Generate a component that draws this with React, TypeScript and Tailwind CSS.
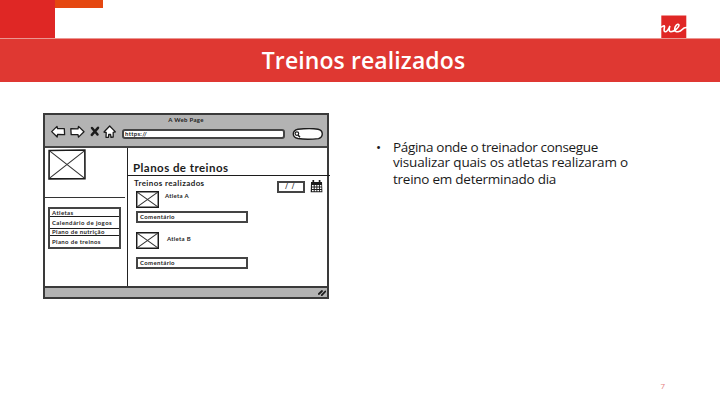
import React from "react";

const ink = "#1c1c1c";

function Placeholder({ className }: { className: string }) {
  return (
    <svg className={className} viewBox="0 0 40 30" preserveAspectRatio="none" fill="none" stroke={ink}>
      <path d="M1.2 1.4 38.8 1 38.9 28.8 1.1 28.9Z" fill="#fff" strokeWidth="1.6" vectorEffect="non-scaling-stroke" />
      <path d="M2 2 38 28M38 2 2 28" stroke="#333" strokeWidth="1.1" vectorEffect="non-scaling-stroke" />
    </svg>
  );
}

function Logo() {
  return (
    <svg className="h-[24px] w-[27px]" viewBox="0 0 27 24" fill="none">
      <path d="M1.3 .5H26.3V24H1.3Z" fill="#e02725" />
      <path
        d="M0 12.6C2 12.3 3 10.8 4 10.8 5.6 10.8 2.6 16.5 5.2 16.7 7.8 16.8 9.4 12 9.9 10.9 9.1 13.5 8.6 16.7 10.9 16.7 13.9 16.7 19.8 12 18.9 9.8 17.8 7.7 14.3 11.5 14.8 14.6 15.3 18.3 20.5 16.5 22.2 14.5 23.3 13.2 24.2 12.4 26.5 12.5"
        stroke="#fff"
        strokeWidth="1.6"
        strokeLinecap="round"
      />
    </svg>
  );
}

function BrowserBar() {
  return (
    <div className="flex h-[33px] shrink-0 flex-col border-b-2 border-[#444] bg-[#b3b3b3]">
      <div className="h-[9px] text-center text-[6px] leading-[9px] font-bold tracking-[0.3px]">A Web Page</div>
      <div className="mt-[1px] flex h-[14px] items-center pl-[6px]">
        <svg className="h-[14px] w-[66px] shrink-0" viewBox="0 0 66 14" fill="#fff" stroke={ink} strokeWidth="1.3" strokeLinejoin="round">
          <path d="M.7 6.6 6 1.4 6.5 3.7 13.3 3.6 13.6 9.6 6.5 9.5 6.2 12Z" />
          <path d="M33 6.8 27.5 1.4 27 3.8 19.8 3.6 20.2 9.6 27 9.6 27.5 12.1Z" />
          <path d="M41 3 46.5 9.5M47 2.8 40.8 9.8" strokeWidth="2.5" strokeLinecap="round" />
          <path d="M58.7 1 53 7 55.2 7.5 55 12.3 57.5 12.3 57.7 9.5 59.6 9.5 60 12.3 62.2 12 62.2 7.4 64.4 6.9Z" />
        </svg>
        <div className="mt-[3px] ml-[5px] h-[10px] w-[163px] shrink-0 rounded-[3px] border-2 border-[#444] bg-white pl-[1px] text-[6px] leading-[6px] font-bold tracking-[0.3px]">
          https://
        </div>
        <svg className="mt-[3px] ml-[7px] h-[12px] w-[32px] shrink-0" viewBox="0 0 32 12" fill="#fff" stroke={ink} strokeWidth="1.4">
          <path d="M6 1.3C13 .4 22 .5 26 1.3 31.6 2.5 31.6 9 26.5 10.6 20 11.3 11 11.3 6 10.5-.3 9-.3 2.8 6 1.3Z" />
          <circle cx="4.9" cy="5.6" r="1.8" strokeWidth="1.2" />
          <path d="M6 7 8 9.3" />
        </svg>
      </div>
    </div>
  );
}

function Sidebar() {
  return (
    <div className="flex w-[82px] shrink-0 flex-col">
      <Placeholder className="mt-[1px] ml-[3px] h-[31px] w-[38px] shrink-0" />
      <div className="mt-[17px] h-px w-[80px] shrink-0 bg-[#333]" />
      <div className="mt-[9px] ml-[3px] flex h-[42px] w-[73px] shrink-0 flex-col border-2 border-[#444] text-[6px] font-bold whitespace-nowrap">
        <div className="h-[8px] border-b border-[#1c1c1c] pl-[2px] leading-[8px] tracking-[0.4px]">Atletas</div>
        <div className="h-[12px] border-b border-[#1c1c1c] pl-[2px] leading-[12px] tracking-[0.4px]">Calendário de jogos</div>
        <div className="h-[7px] border-b border-[#1c1c1c] pl-[2px] leading-[6px] tracking-[0.35px]">Plano de nutrição</div>
        <div className="h-[11px] pl-[2px] leading-[11px] tracking-[0.35px]">Plano de treinos</div>
      </div>
    </div>
  );
}

function Comment() {
  return (
    <div className="ml-[8px] h-[12px] w-[112px] shrink-0 border-2 border-[#444] pl-[2px] text-[6px] leading-[8px] font-bold tracking-[0.35px]">
      Comentário
    </div>
  );
}

function Calendar() {
  return (
    <svg className="h-[13px] w-[13px] shrink-0" viewBox="0 0 13 13">
      <path d="M1 2H12L12.4 12.3H.7Z" fill={ink} />
      <path d="M3.3 0V3M9.6 0V3" stroke={ink} strokeWidth="1.7" />
      <path d="M2 5h1.7v1.5H2zM4.7 5h1.7v1.5H4.7zM7.3 5H9v1.5H7.3zM9.9 5h1.5v1.5H9.9zM2 7.5h1.7V9H2zM4.7 7.5h1.7V9H4.7zM7.3 7.5H9V9H7.3zM9.9 7.5h1.5V9H9.9zM2 10h1.7v1.3H2zM4.7 10h1.7v1.3H4.7zM7.3 10H9v1.3H7.3zM9.9 10h1.5v1.3H9.9z" fill="#fff" />
    </svg>
  );
}

function Content() {
  return (
    <div className="flex w-[202px] shrink-0 flex-col border-l border-[#222]">
      <div className="h-[28px] w-[202px] shrink-0 border-b border-[#1c1c1c] pt-[13px] pl-[5px] text-[11.5px] leading-[14px] font-bold tracking-[0.45px] whitespace-nowrap">
        Planos de treinos
      </div>
      <div className="flex h-[15px] shrink-0">
        <div className="mt-[2px] ml-[6px] w-[143px] shrink-0 text-[8px] leading-[11px] font-bold tracking-[0.4px] whitespace-nowrap">Treinos realizados</div>
        <div className="mt-[5px] h-[12px] w-[28px] shrink-0 border-2 border-[#444] pl-[6px] text-[6.5px] leading-[8px] font-bold tracking-[1px]">/ /</div>
        <div className="mt-[4px] ml-[5px]"><Calendar /></div>
      </div>
      <div className="ml-[8px] flex h-[20px] shrink-0">
        <Placeholder className="h-[17px] w-[23px]" />
        <span className="ml-[6px] text-[6px] leading-[10px] font-bold tracking-[0.3px]">Atleta A</span>
      </div>
      <Comment />
      <div className="mt-[9px] ml-[8px] flex h-[25px] shrink-0">
        <Placeholder className="h-[17px] w-[23px]" />
        <span className="ml-[8px] text-[6px] leading-[14px] font-bold tracking-[0.3px]">Atleta B</span>
      </div>
      <Comment />
    </div>
  );
}

function Wireframe() {
  return (
    <div className="flex h-[186px] w-[286px] shrink-0 flex-col border-2 border-[#3a3a3a] bg-white font-['Lato',sans-serif] text-[#1c1c1c]">
      <BrowserBar />
      <div className="flex h-[138px] shrink-0">
        <Sidebar />
        <Content />
      </div>
      <div className="flex flex-1 justify-end border-t-2 border-[#3a3a3a] bg-[#b3b3b3] pt-[2px] pr-[1px]">
        <svg className="h-[6px] w-[8px]" viewBox="0 0 8 6" stroke={ink} strokeWidth="1.8" strokeLinecap="round">
          <path d="M.8 4 4 1M3.8 5.2 7.3 1.5" />
        </svg>
      </div>
    </div>
  );
}

export default function App() {
  return (
    <div className="flex h-[405px] w-[720px] flex-col overflow-hidden bg-white font-['Open_Sans',sans-serif]">
      <header className="flex h-[38px] shrink-0">
        <div className="h-[38px] w-[55px] bg-[#df2725]" />
        <div className="h-[8px] w-[48px] bg-[#e54710]" />
        <div className="mt-[15px] ml-[557px]"><Logo /></div>
      </header>
      <div className="flex h-[44px] shrink-0 justify-center border-t border-[#eb9692] bg-[#df3832] pl-[7px]">
        <h1 className="text-[23px] leading-[43px] font-semibold tracking-[0.1px] whitespace-nowrap text-white">Treinos realizados</h1>
      </div>
      <main className="flex h-[298px] shrink-0 pt-[31px] pl-[43px]">
        <Wireframe />
        <div className="mt-[26px] ml-[47px] flex text-[13.5px] text-[#1a1a1a]">
          <span className="w-[17px] leading-[16px]">•</span>
          <p className="whitespace-nowrap">
            <span className="block h-[15px] leading-[16px] tracking-[-0.33px]">Página onde o treinador consegue</span>
            <span className="block h-[17px] leading-[16px] tracking-[-0.16px]">visualizar quais os atletas realizaram o</span>
            <span className="block h-[16px] leading-[16px] tracking-[-0.25px]">treino em determinado dia</span>
          </p>
        </div>
      </main>
      <footer className="flex justify-end pr-[55px] text-[8px] leading-[12px] text-[#e58080]">7</footer>
    </div>
  );
}
